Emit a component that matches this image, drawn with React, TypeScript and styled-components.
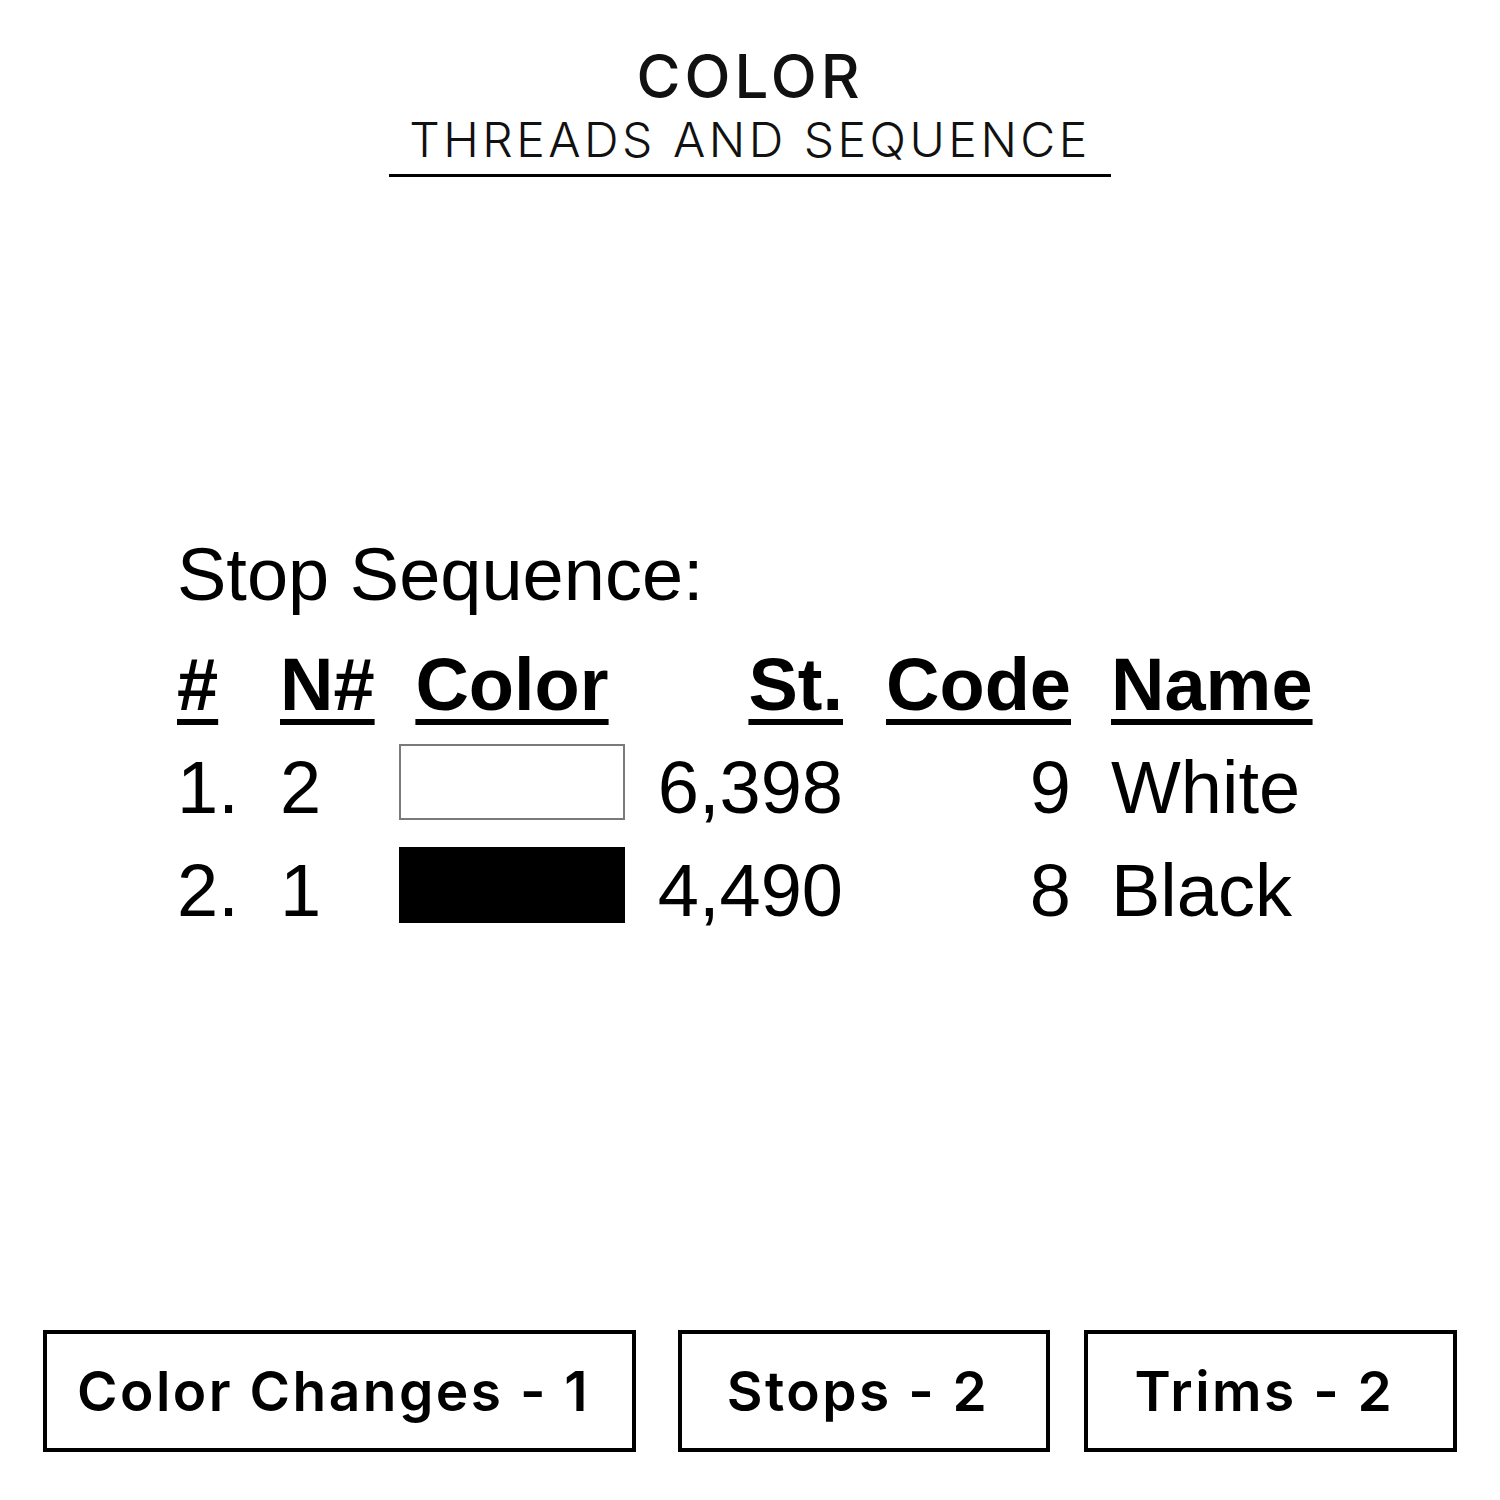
import React from "react";
import styled, { createGlobalStyle } from "styled-components";

const Global = createGlobalStyle`
  html, body { margin: 0; padding: 0; background: #ffffff; }
  body { font-family: "Liberation Sans", Arial, sans-serif; color: #000; }
`;

const Page = styled.div`
  width: 1500px;
  height: 1500px;
  display: flex;
  flex-direction: column;
  box-sizing: border-box;
  padding: 46px 43px 48px;
  background: #fff;
`;

const Header = styled.header`
  display: flex;
  flex-direction: column;
  align-items: center;
`;

const Title = styled.h1`
  margin: 0;
  font-family: Inter, "Noto Sans", sans-serif;
  font-weight: 500;
  font-size: 60px;
  line-height: 60px;
  letter-spacing: 4px;
  color: #111;
`;

const Subtitle = styled.h2`
  margin: 10px 0 0;
  padding: 0 20px 10px;
  border-bottom: 3px solid #000;
  font-family: Inter, "Noto Sans", sans-serif;
  font-weight: 300;
  font-size: 48px;
  line-height: 48px;
  letter-spacing: 3.5px;
  color: #111;
`;

const Sequence = styled.section`
  margin-top: 346px;
  padding-left: 134px;
  font-family: "Liberation Sans", Arial, sans-serif;
  font-size: 74px;
  line-height: 103px;
`;

const Caption = styled.div`
  margin-bottom: 7px;
`;

const Table = styled.div`
  display: grid;
  grid-template-columns: 103px 119px 226px 218px 228px auto;
  grid-auto-rows: 103px;
`;

const Cell = styled.div<{ $align?: "left" | "right" | "center"; $pad?: number }>`
  text-align: ${(p) => p.$align || "left"};
  padding-left: ${(p) => p.$pad || 0}px;
  white-space: nowrap;
`;

const HeadCell = styled(Cell)`
  font-weight: 700;
  text-decoration: underline;
  text-decoration-thickness: 6px;
  text-underline-offset: 9px;
`;

const Swatch = styled.div<{ $fill: string; $edge: string }>`
  margin-top: 8px;
  width: 226px;
  height: 76px;
  box-sizing: border-box;
  background: ${(p) => p.$fill};
  border: 2px solid ${(p) => p.$edge};
`;

const Stats = styled.div`
  margin-top: auto;
  display: flex;
  gap: 42px;
`;

const StatBox = styled.div<{ $w: number; $shift?: number }>`
  width: ${(p) => p.$w}px;
  margin-left: ${(p) => p.$shift || 0}px;
  height: 122px;
  box-sizing: border-box;
  border: 4px solid #000;
  padding-right: 12px;
  display: flex;
  align-items: center;
  justify-content: center;
  font-family: Inter, "Noto Sans", sans-serif;
  font-weight: 600;
  font-size: 55px;
  letter-spacing: 2.5px;
  color: #000;
`;

const rows = [
  { idx: "1.", n: "2", fill: "#ffffff", edge: "#7a7a7a", st: "6,398", code: "9", name: "White" },
  { idx: "2.", n: "1", fill: "#000000", edge: "#000000", st: "4,490", code: "8", name: "Black" },
];

export default function App() {
  return (
    <>
      <Global />
      <Page>
        <Header>
          <Title>COLOR</Title>
          <Subtitle>THREADS AND SEQUENCE</Subtitle>
        </Header>
        <Sequence>
          <Caption>Stop Sequence:</Caption>
          <Table>
            <HeadCell>#</HeadCell>
            <HeadCell>N#</HeadCell>
            <HeadCell $align="center">Color</HeadCell>
            <HeadCell $align="right">St.</HeadCell>
            <HeadCell $align="right">Code</HeadCell>
            <HeadCell $pad={40}>Name</HeadCell>
            {rows.map((r) => (
              <React.Fragment key={r.idx}>
                <Cell>{r.idx}</Cell>
                <Cell>{r.n}</Cell>
                <Cell>
                  <Swatch $fill={r.fill} $edge={r.edge} />
                </Cell>
                <Cell $align="right">{r.st}</Cell>
                <Cell $align="right">{r.code}</Cell>
                <Cell $pad={40}>{r.name}</Cell>
              </React.Fragment>
            ))}
          </Table>
        </Sequence>
        <Stats>
          <StatBox $w={593}>Color Changes - 1</StatBox>
          <StatBox $w={372}>Stops - 2</StatBox>
          <StatBox $w={373} $shift={-8}>Trims - 2</StatBox>
        </Stats>
      </Page>
    </>
  );
}
